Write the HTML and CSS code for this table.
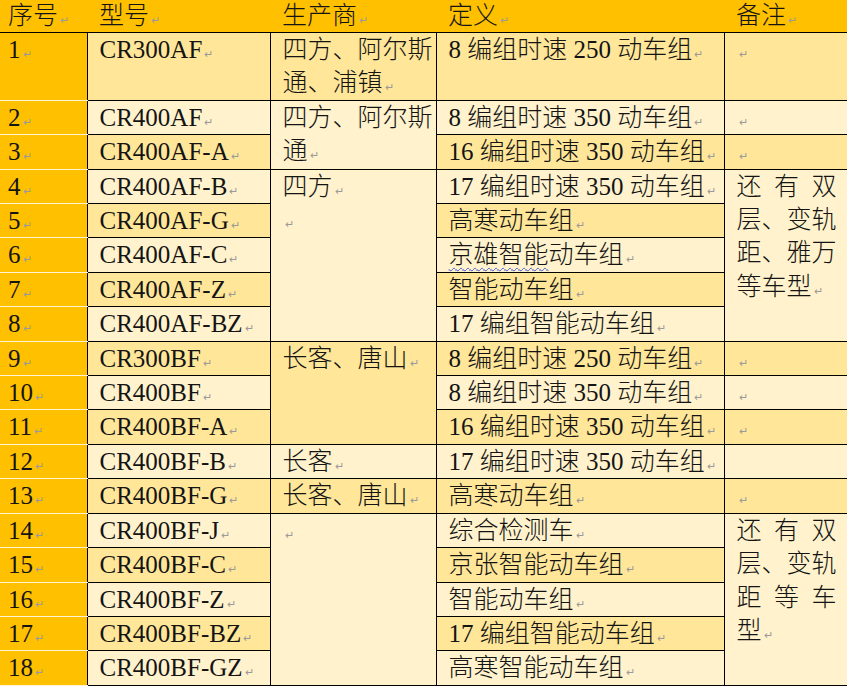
FILE: index.html
```html
<!DOCTYPE html>
<html lang="zh-CN">
<head>
<meta charset="utf-8">
<title>动车组型号</title>
<link rel="stylesheet" href="styles.css">
</head>
<body>
<table class="models">
  <colgroup>
    <col class="c1"><col class="c2"><col class="c3"><col class="c4"><col class="c5">
  </colgroup>
  <thead>
    <tr>
      <th class="no">序号<span class="pm">↵</span></th>
      <th>型号<span class="pm">↵</span></th>
      <th>生产商<span class="pm">↵</span></th>
      <th>定义<span class="pm">↵</span></th>
      <th class="last">备注<span class="pm">↵</span></th>
    </tr>
  </thead>
  <tbody>
    <tr class="odd">
      <td class="no">1<span class="pm">↵</span></td>
      <td>CR300AF<span class="pm">↵</span></td>
      <td>四方、阿尔斯通、浦镇<span class="pm">↵</span></td>
      <td>8 编组时速 250 动车组<span class="pm">↵</span></td>
      <td class="last"><span class="pm">↵</span></td>
    </tr>
    <tr class="even">
      <td class="no">2<span class="pm">↵</span></td>
      <td>CR400AF<span class="pm">↵</span></td>
      <td rowspan="2">四方、阿尔斯通<span class="pm">↵</span></td>
      <td>8 编组时速 350 动车组<span class="pm">↵</span></td>
      <td class="last"><span class="pm">↵</span></td>
    </tr>
    <tr class="odd">
      <td class="no">3<span class="pm">↵</span></td>
      <td>CR400AF-A<span class="pm">↵</span></td>
      <td>16 编组时速 350 动车组<span class="pm">↵</span></td>
      <td class="last"><span class="pm">↵</span></td>
    </tr>
    <tr class="even">
      <td class="no">4<span class="pm">↵</span></td>
      <td>CR400AF-B<span class="pm">↵</span></td>
      <td rowspan="5"><div>四方<span class="pm">↵</span></div><div><span class="pm">↵</span></div></td>
      <td>17 编组时速 350 动车组<span class="pm">↵</span></td>
      <td class="last" rowspan="5">
        <div class="jl">还有双</div>
        <div class="jl">层、变轨</div>
        <div class="jl">距、雅万</div>
        <div>等车型<span class="pm">↵</span></div>
      </td>
    </tr>
    <tr class="odd">
      <td class="no">5<span class="pm">↵</span></td>
      <td>CR400AF-G<span class="pm">↵</span></td>
      <td>高寒动车组<span class="pm">↵</span></td>
    </tr>
    <tr class="even">
      <td class="no">6<span class="pm">↵</span></td>
      <td>CR400AF-C<span class="pm">↵</span></td>
      <td><span class="sp">京雄智能</span>动车组<span class="pm">↵</span></td>
    </tr>
    <tr class="odd">
      <td class="no">7<span class="pm">↵</span></td>
      <td>CR400AF-Z<span class="pm">↵</span></td>
      <td>智能动车组<span class="pm">↵</span></td>
    </tr>
    <tr class="even">
      <td class="no">8<span class="pm">↵</span></td>
      <td>CR400AF-BZ<span class="pm">↵</span></td>
      <td>17 编组智能动车组<span class="pm">↵</span></td>
    </tr>
    <tr class="odd">
      <td class="no">9<span class="pm">↵</span></td>
      <td>CR300BF<span class="pm">↵</span></td>
      <td rowspan="3">长客、唐山<span class="pm">↵</span></td>
      <td>8 编组时速 250 动车组<span class="pm">↵</span></td>
      <td class="last"><span class="pm">↵</span></td>
    </tr>
    <tr class="even">
      <td class="no">10<span class="pm">↵</span></td>
      <td>CR400BF<span class="pm">↵</span></td>
      <td>8 编组时速 350 动车组<span class="pm">↵</span></td>
      <td class="last"><span class="pm">↵</span></td>
    </tr>
    <tr class="odd">
      <td class="no">11<span class="pm">↵</span></td>
      <td>CR400BF-A<span class="pm">↵</span></td>
      <td>16 编组时速 350 动车组<span class="pm">↵</span></td>
      <td class="last"><span class="pm">↵</span></td>
    </tr>
    <tr class="even">
      <td class="no">12<span class="pm">↵</span></td>
      <td>CR400BF-B<span class="pm">↵</span></td>
      <td>长客<span class="pm">↵</span></td>
      <td>17 编组时速 350 动车组<span class="pm">↵</span></td>
      <td class="last"></td>
    </tr>
    <tr class="odd">
      <td class="no">13<span class="pm">↵</span></td>
      <td>CR400BF-G<span class="pm">↵</span></td>
      <td>长客、唐山<span class="pm">↵</span></td>
      <td>高寒动车组<span class="pm">↵</span></td>
      <td class="last"><span class="pm">↵</span></td>
    </tr>
    <tr class="even">
      <td class="no">14<span class="pm">↵</span></td>
      <td>CR400BF-J<span class="pm">↵</span></td>
      <td rowspan="5"><span class="pm">↵</span></td>
      <td>综合检测车<span class="pm">↵</span></td>
      <td class="last" rowspan="5">
        <div class="jl">还有双</div>
        <div class="jl">层、变轨</div>
        <div class="jl">距等车</div>
        <div>型<span class="pm">↵</span></div>
      </td>
    </tr>
    <tr class="odd">
      <td class="no">15<span class="pm">↵</span></td>
      <td>CR400BF-C<span class="pm">↵</span></td>
      <td>京张智能动车组<span class="pm">↵</span></td>
    </tr>
    <tr class="even">
      <td class="no">16<span class="pm">↵</span></td>
      <td>CR400BF-Z<span class="pm">↵</span></td>
      <td>智能动车组<span class="pm">↵</span></td>
    </tr>
    <tr class="odd">
      <td class="no">17<span class="pm">↵</span></td>
      <td>CR400BF-BZ<span class="pm">↵</span></td>
      <td>17 编组智能动车组<span class="pm">↵</span></td>
    </tr>
    <tr class="even">
      <td class="no">18<span class="pm">↵</span></td>
      <td>CR400BF-GZ<span class="pm">↵</span></td>
      <td>高寒智能动车组<span class="pm">↵</span></td>
    </tr>
  </tbody>
</table>
</body>
</html>
```
FILE: styles.css
```css
html, body {
  margin: 0;
  padding: 0;
  background: #ffffff;
}

.models {
  border-collapse: collapse;
  table-layout: fixed;
  width: 847px;
  font-family: "Liberation Serif", "Noto Sans CJK SC", serif;
  font-size: 25px;
  font-weight: 300;
  color: #141414;
}

.c1 { width: 87px; }
.c2 { width: 183px; }
.c3 { width: 166px; }
.c4 { width: 288px; }
.c5 { width: 123px; }

.models th,
.models td {
  padding: 0 2px 0 12px;
  line-height: 33.4px;
  text-align: left;
  vertical-align: top;
  font-weight: 300;
}

.models thead th {
  background: #ffc000;
  line-height: 32px;
  border: none;
  border-bottom: 1px solid #000000;
}

.models tbody td {
  border: 1px solid #000000;
}

.models tr.odd td {
  background: #ffe699;
}

.models tr.even td {
  background: #fff2cc;
}

.models .no {
  padding-left: 8px;
}

.models tbody td.no {
  background: #ffc000;
  border-left: none;
  border-top-color: #fff4d6;
  border-bottom-color: #fff4d6;
}

.models tr.odd td.no,
.models tr.even td.no {
  background: #ffc000;
}

.models .last {
  border-right: none;
  padding-left: 12px;
  padding-right: 4px;
}

.pm {
  font-family: "DejaVu Sans", sans-serif;
  font-size: 11px;
  line-height: 1;
  color: #9a9a9a;
  margin-left: 2px;
}

.jl {
  text-align: justify;
  text-align-last: justify;
  white-space: nowrap;
  width: 100px;
}

.sp {
  text-decoration: underline wavy #3f57d6;
  text-decoration-thickness: 1px;
  text-underline-offset: 4px;
}
```
